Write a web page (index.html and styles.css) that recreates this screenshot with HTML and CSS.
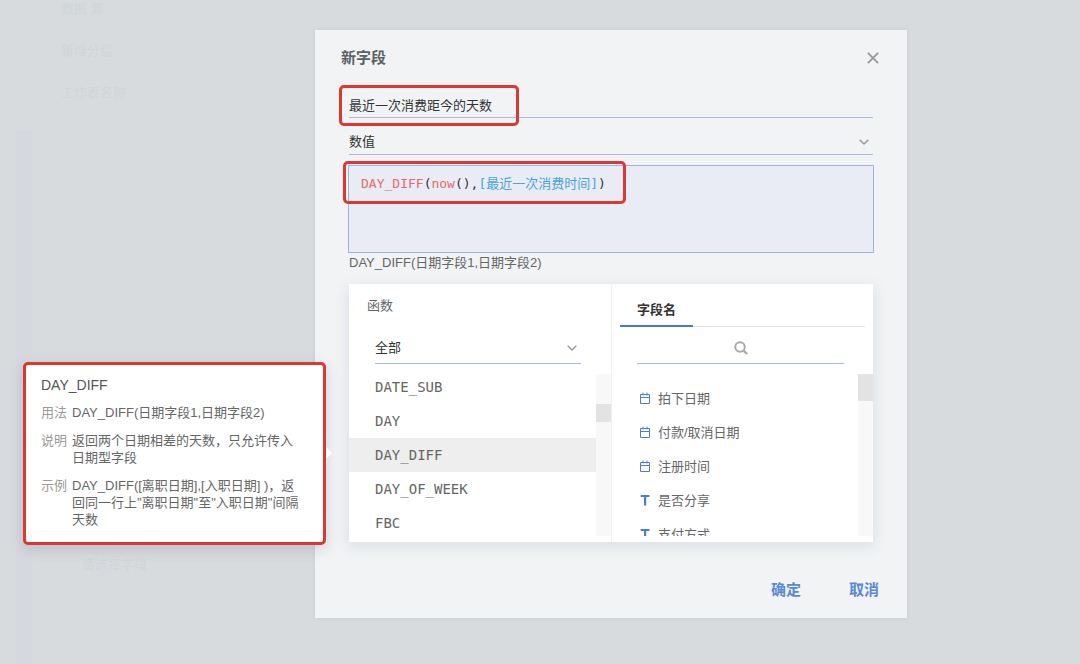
FILE: index.html
```
<!DOCTYPE html>
<html lang="zh-CN">
<head>
    <meta charset="UTF-8">
    <meta name="viewport" content="width=device-width, initial-scale=1.0">
    <title>新字段</title>
    <link rel="stylesheet" href="styles.css">
</head>
<body>
    <!-- icons -->
    <svg class="icon-defs" aria-hidden="true">
        <symbol id="icon-chevron" viewBox="0 0 10 6">
            <path d="M.7.7 5 5 9.3.7" fill="none" stroke="currentColor" stroke-width="1.4"/>
        </symbol>
        <symbol id="icon-date" viewBox="0 0 12 12">
            <path d="M1.5 2.500h9v9h-9zM1.5 5.500h9M4 .5v3M8 .5v3" fill="none" stroke="currentColor" stroke-width="1"/>
        </symbol>
        <symbol id="icon-text" viewBox="0 0 12 12">
            <path d="M1.700 1h8.800v2.100H7.200V11.500H5V3.100H1.700z" fill="currentColor"/>
        </symbol>
    </svg>

    <div class="page">
        <div class="side-bar"></div>
        <div class="page-list">
            <span>数据 源</span>
            <span>新增分组</span>
            <span>工作表名称</span>
            <span class="page-field">请选择字段</span>
        </div>
    </div>

    <div class="overlay">
        <div class="modal" role="dialog" aria-labelledby="modal-title">
            <div class="modal-header">
                <h1 id="modal-title">新字段</h1>
                <button class="close" type="button" aria-label="关闭">
                    <svg width="12" height="12" viewBox="0 0 12 12"><path d="M.9.9l10.200 10.200M11.100.9.9 11.100" fill="none" stroke="currentColor" stroke-width="1.900"/></svg>
                </button>
            </div>

            <div class="modal-body">
                <div class="field">
                    <input class="line-input" type="text" aria-label="字段名称" value="最近一次消费距今的天数">
                    <div class="mark mark-name"></div>
                </div>

                <div class="field picker">
                    <select class="line-input" aria-label="字段类型">
                        <option>数值</option>
                    </select>
                    <svg class="chevron"><use href="#icon-chevron"/></svg>
                </div>

                <div class="editor">
                    <textarea class="code" aria-label="公式" spellcheck="false">DAY_DIFF(now(),[最近一次消费时间])</textarea>
                    <pre class="code code-view" aria-hidden="true"><span class="fn">DAY_DIFF</span>(<span class="fn">now</span>(),<span class="col">[最近一次消费时间]</span>)</pre>
                    <div class="mark mark-code"></div>
                </div>
                <p class="hint">DAY_DIFF(日期字段1,日期字段2)</p>

                <div class="panel">
                    <div class="functions">
                        <h2>函数</h2>
                        <div class="picker function-type">
                            <select class="line-input" aria-label="函数类型">
                                <option>全部</option>
                            </select>
                            <svg class="chevron"><use href="#icon-chevron"/></svg>
                        </div>
                        <div class="scroll-area">
                            <ul class="function-list">
                                <li><button type="button">DATE_SUB</button></li>
                                <li><button type="button">DAY</button></li>
                                <li><button type="button" class="active">DAY_DIFF</button></li>
                                <li><button type="button">DAY_OF_WEEK</button></li>
                                <li><button type="button">FBC</button></li>
                            </ul>
                            <div class="track track-functions"><div class="thumb"></div></div>
                        </div>
                    </div>

                    <div class="fields">
                        <div class="tabs" role="tablist">
                            <button class="tab active" type="button" role="tab" aria-selected="true">字段名</button>
                        </div>
                        <div class="search">
                            <input class="line-input" type="search" aria-label="搜索字段">
                            <svg class="search-icon" viewBox="0 0 14 14"><circle cx="6" cy="6" r="4.800" fill="none" stroke="currentColor" stroke-width="2"/><path d="M9.400 9.400 13 13" stroke="currentColor" stroke-width="2.400"/></svg>
                        </div>
                        <div class="scroll-area">
                            <ul class="field-list">
                                <li><button type="button"><svg><use href="#icon-date"/></svg>拍下日期</button></li>
                                <li><button type="button"><svg><use href="#icon-date"/></svg>付款/取消日期</button></li>
                                <li><button type="button"><svg><use href="#icon-date"/></svg>注册时间</button></li>
                                <li><button type="button"><svg><use href="#icon-text"/></svg>是否分享</button></li>
                                <li><button type="button"><svg><use href="#icon-text"/></svg>支付方式</button></li>
                            </ul>
                            <div class="track track-fields"><div class="thumb"></div></div>
                        </div>
                    </div>
                </div>
            </div>

            <div class="modal-footer">
                <button type="button">确定</button>
                <button type="button">取消</button>
            </div>

            <div class="tooltip" role="tooltip">
                <h3>DAY_DIFF</h3>
                <dl>
                    <dt>用法</dt>
                    <dd>DAY_DIFF(日期字段1,日期字段2)</dd>
                    <dt>说明</dt>
                    <dd>返回两个日期相差的天数，只允许传入日期型字段</dd>
                    <dt>示例</dt>
                    <dd>DAY_DIFF([离职日期],[入职日期] )，返回同一行上"离职日期"至"入职日期"间隔天数</dd>
                </dl>
            </div>
        </div>
    </div>
</body>
</html>
```
FILE: styles.css
```
* {
    box-sizing: border-box;
}
body {
    margin: 0;
    min-height: 100vh;
    background-color: #d7dbde;
    color: #666;
    font-family: "Liberation Sans", "Noto Sans CJK SC", sans-serif;
    font-size: 13px;
    line-height: 17px;
}
h1, h2, h3, p, ul, dl, dd, pre {
    margin: 0;
    padding: 0;
}
ul {
    list-style: none;
}
button, input, select, textarea {
    margin: 0;
    padding: 0;
    border: none;
    border-radius: 0;
    outline: none;
    background: none;
    color: inherit;
    font: inherit;
}
button {
    cursor: pointer;
}
.icon-defs {
    display: none;
}

/* page behind the dialog */
.page {
    display: flex;
    min-height: 100vh;
    padding-left: 16px;
}
.side-bar {
    width: 16px;
    margin-top: 130px;
    background-color: #d5d8df;
}
.page-list {
    display: flex;
    flex-direction: column;
    gap: 25px;
    padding-left: 29px;
    color: #d1d5d8;
}
.page-field {
    margin-top: 430px;
    padding-left: 21px;
}

/* dialog */
.overlay {
    position: absolute;
    top: 0;
    left: 0;
    width: 100%;
    padding: 30px 173px 46px 315px;
}
.modal {
    position: relative;
    padding: 18px 28px 18px 26px;
    background-color: #f1f3f5;
    box-shadow: 0 0 4px rgba(90, 100, 120, 0.12);
}
.modal-header {
    display: flex;
    align-items: center;
    justify-content: space-between;
    height: 20px;
}
.modal-header h1 {
    color: #5c6167;
    font-size: 15px;
    font-weight: bold;
    line-height: 20px;
}
.close {
    display: flex;
    padding: 4px 0 4px 4px;
    color: #999;
}
.modal-body {
    padding: 23px 6px 0 8px;
}
.field {
    position: relative;
    margin-bottom: 10px;
}
.line-input {
    display: block;
    width: 100%;
    height: 27px;
    border-bottom: 1px solid #a6bbdf;
    appearance: none;
    color: #333;
}
.picker, .search {
    display: grid;
    align-items: center;
}
.picker > *, .search > * {
    grid-area: 1 / 1;
}
.chevron {
    width: 10px;
    height: 6px;
    margin-right: 4px;
    justify-self: end;
    color: #999;
    pointer-events: none;
}

/* red frames */
.mark {
    position: absolute;
    border: 3px solid #db382f;
    border-radius: 5px;
    pointer-events: none;
}
.mark-name {
    top: -6px;
    left: -10px;
    width: 180px;
    height: 41px;
}
.mark-code {
    top: -5px;
    left: -6px;
    width: 283px;
    height: 43px;
}

/* formula editor */
.editor {
    position: relative;
    display: grid;
    height: 88px;
    margin: 0 -1px;
    border: 1px solid #9fb4df;
    background-color: #e9ecf4;
}
.code {
    grid-area: 1 / 1;
    padding: 9px 12px;
    color: transparent;
    caret-color: #333;
    font-family: "DejaVu Sans Mono", "Noto Sans CJK SC", monospace;
    font-size: 13px;
    line-height: 18px;
    resize: none;
}
.code-view {
    color: #333;
    pointer-events: none;
}
.fn {
    color: #e8686c;
}
.col {
    color: #4ba3d9;
}
.hint {
    margin: 1px 0 13px;
}

/* functions and fields */
.panel {
    display: grid;
    grid-template-columns: 263px 1fr;
    height: 258px;
    background-color: #fff;
    box-shadow: 0 4px 14px rgba(80, 100, 120, 0.14);
}
.functions {
    border-right: 1px solid #f0f1f2;
}
.functions h2 {
    padding: 13px 18px 0;
    font-size: 13px;
    font-weight: normal;
}
.function-type {
    margin: 17px 30px 6px 26px;
}
.function-type .line-input {
    height: 33px;
}
.scroll-area {
    display: flex;
}
.scroll-area ul {
    flex: 1;
    overflow: hidden;
}
.scroll-area li button {
    display: flex;
    align-items: center;
    width: 100%;
    height: 34px;
}
.function-list button {
    padding-left: 26px;
    font-family: "DejaVu Sans Mono", monospace;
    font-size: 14px;
}
.function-list .active {
    background-color: #eee;
}
.track {
    width: 15px;
    height: 162px;
    background-color: #f8f8f8;
}
.track-functions {
    margin-top: 4px;
    padding-top: 30px;
}
.thumb {
    height: 18px;
    background-color: #e3e3e3;
}
.track-fields .thumb {
    height: 27px;
}
.tabs {
    display: flex;
    height: 43px;
    margin: 0 8px;
    box-shadow: inset 0 -1px #dfe2e5;
}
.tab {
    padding: 10px 17px 0;
}
.tab.active {
    border-bottom: 2px solid #4c79c6;
    color: #333;
    font-weight: bold;
}
.search {
    margin: 4px 29px 10px 25px;
}
.search .line-input {
    height: 33px;
}
.search-icon {
    width: 14px;
    height: 14px;
    justify-self: center;
    color: #aaa;
    pointer-events: none;
}
.field-list {
    height: 162px;
    padding-top: 7px;
}
.field-list button {
    gap: 7px;
    padding-left: 27px;
}
.field-list svg {
    width: 12px;
    height: 12px;
    color: #4c7fcb;
}

.modal-footer {
    display: flex;
    justify-content: flex-end;
    gap: 48px;
    margin-top: 38px;
    color: #5b89d4;
    font-size: 15px;
    line-height: 20px;
}
.modal-footer button {
    font-weight: bold;
}

/* function help */
.tooltip {
    position: absolute;
    top: 332px;
    right: calc(100% - 11px);
    width: 303px;
    padding: 12px 19px 14px 15px;
    border: 3px solid #db382f;
    border-radius: 5px;
    background-color: #fff;
    box-shadow: 0 4px 14px rgba(70, 80, 130, 0.2);
}
.tooltip::after {
    content: "";
    position: absolute;
    top: 82px;
    left: 100%;
    margin-left: 3px;
    border: 6px solid transparent;
    border-left-color: #fff;
    border-right: none;
}
.tooltip h3 {
    margin-bottom: 10px;
    color: #555;
    font-size: 14px;
    font-weight: 500;
}
.tooltip dl {
    display: grid;
    grid-template-columns: 26px 1fr;
    gap: 11px 5px;
}
.tooltip dt {
    color: #999;
}
```
